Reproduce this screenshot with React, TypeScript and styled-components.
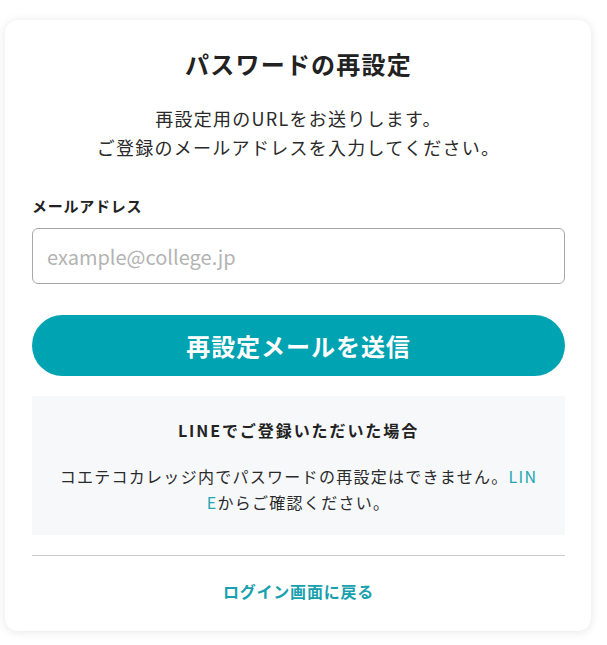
import React from 'react';
import styled, { createGlobalStyle } from 'styled-components';

const GlobalStyle = createGlobalStyle`
  * {
    box-sizing: border-box;
  }

  body {
    margin: 0;
    background: #fff;
    font-family: "Noto Sans CJK JP", "Noto Sans", sans-serif;
    color: #222;
  }
`;

const teal = '#00a3b1';

const Page = styled.div`
  padding: 20px 0 12px 5px;
`;

const Card = styled.div`
  width: 586px;
  background: #fff;
  border-radius: 13px;
  box-shadow: 0 1px 10px rgba(0, 0, 0, 0.1);
  padding: 26px 26px 28px 27px;
  display: flex;
  flex-direction: column;
`;

const Title = styled.h1`
  margin: 0;
  font-size: 24px;
  line-height: 36px;
  font-weight: 700;
  letter-spacing: 0.05em;
  text-align: center;
  color: #222;
`;

const Lead = styled.p`
  margin: 22px 0 0;
  font-size: 18px;
  line-height: 29px;
  letter-spacing: 0.07em;
  text-align: center;
  color: #2a2a2a;
`;

const Label = styled.label`
  margin-top: 33px;
  font-size: 15px;
  line-height: 22px;
  font-weight: 700;
  letter-spacing: 0.05em;
  color: #222;
`;

const Input = styled.input`
  margin-top: 11px;
  width: 100%;
  height: 56px;
  border: 1px solid #a8a8a8;
  border-radius: 6px;
  padding: 0 14px;
  font-family: inherit;
  font-size: 20px;
  color: #333;
  outline: none;

  &::placeholder {
    color: #b3b3b3;
  }
`;

const SubmitButton = styled.button`
  margin-top: 31px;
  width: 100%;
  height: 61px;
  border: none;
  border-radius: 31px;
  background: ${teal};
  color: #fff;
  font-family: inherit;
  font-size: 24px;
  font-weight: 700;
  letter-spacing: 0.04em;
  cursor: pointer;
`;

const Notice = styled.div`
  margin-top: 20px;
  background: #f6f8fa;
  padding: 22px 25px 20px;
  text-align: center;
`;

const NoticeTitle = styled.p`
  margin: 0;
  font-size: 16px;
  line-height: 24px;
  font-weight: 700;
  letter-spacing: 0.12em;
  color: #222;
`;

const NoticeText = styled.p`
  margin: 21px 0 0;
  font-size: 16px;
  line-height: 26px;
  letter-spacing: 0.08em;
  color: #2a2a2a;
  word-break: break-all;
`;

const InlineLink = styled.a`
  color: #21a6b3;
  text-decoration: none;
`;

const Divider = styled.hr`
  margin: 20px 0 0;
  border: none;
  border-top: 1px solid #cccccc;
`;

const BackLink = styled.a`
  margin-top: 23px;
  font-size: 16px;
  line-height: 24px;
  font-weight: 700;
  letter-spacing: 0.05em;
  text-align: center;
  color: #17a0ad;
  text-decoration: none;
`;

export default function App() {
  return (
    <Page>
      <GlobalStyle />
      <Card>
        <Title>パスワードの再設定</Title>
        <Lead>
          再設定用のURLをお送りします。
          <br />
          ご登録のメールアドレスを入力してください。
        </Lead>
        <Label htmlFor="email">メールアドレス</Label>
        <Input id="email" type="email" placeholder="example@college.jp" />
        <SubmitButton type="button">再設定メールを送信</SubmitButton>
        <Notice>
          <NoticeTitle>LINEでご登録いただいた場合</NoticeTitle>
          <NoticeText>
            コエテコカレッジ内でパスワードの再設定はできません。
            <InlineLink href="#">LINE</InlineLink>
            からご確認ください。
          </NoticeText>
        </Notice>
        <Divider />
        <BackLink href="#">ログイン画面に戻る</BackLink>
      </Card>
    </Page>
  );
}
